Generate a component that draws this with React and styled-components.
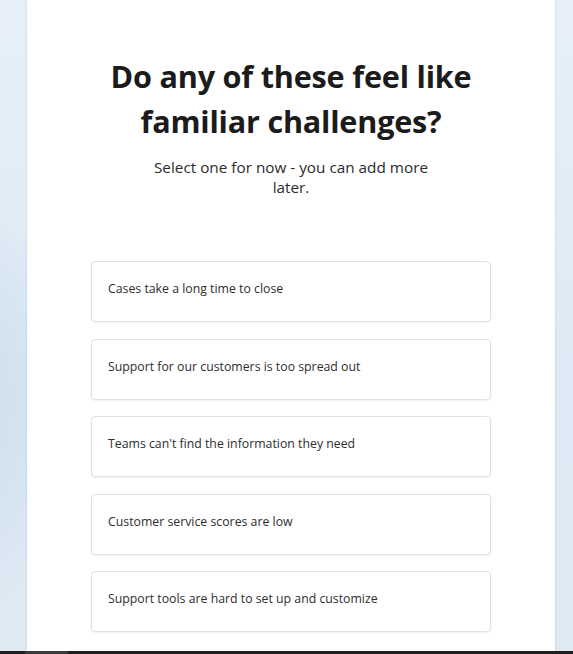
import styled, { createGlobalStyle } from 'styled-components';

const GlobalStyle = createGlobalStyle`
  html, body {
    margin: 0;
    padding: 0;
    height: 100%;
  }
  body {
    font-family: "Open Sans", "Noto Sans", sans-serif;
    background: #e2ecf6;
  }
`;

const challenges = [
  'Cases take a long time to close',
  'Support for our customers is too spread out',
  "Teams can't find the information they need",
  'Customer service scores are low',
  'Support tools are hard to set up and customize',
];

const Page = () => (
  <>
    <GlobalStyle />
    <Screen>
      <Backdrop>
        <Card>
          <Title>Do any of these feel like familiar challenges?</Title>
          <Subtitle>Select one for now - you can add more later.</Subtitle>
          <OptionList>
            {challenges.map((c) => (
              <Option key={c} type="button">{c}</Option>
            ))}
          </OptionList>
        </Card>
      </Backdrop>
      <Taskbar>
        <TaskbarButton />
      </Taskbar>
    </Screen>
  </>
);

const Screen = styled.div`
  width: 573px;
  height: 654px;
  display: flex;
  flex-direction: column;
  overflow: hidden;
`;

const Backdrop = styled.div`
  flex: 1;
  display: flex;
  padding-left: 27px;
  background:
    radial-gradient(ellipse 190px 300px at -60px 400px, rgba(196, 218, 232, 0.95), rgba(196, 218, 232, 0) 72%),
    linear-gradient(180deg, #e7f0f9 0%, #dde9f4 60%, #dfe9f4 100%);
  overflow: hidden;
`;

const Card = styled.div`
  width: 528px;
  flex-shrink: 0;
  background: #fff;
  box-shadow: 0 0 2px rgba(120, 150, 180, 0.35);
  display: flex;
  flex-direction: column;
  align-items: center;
  padding-top: 54px;
`;

const Title = styled.h1`
  margin: 0;
  width: 380px;
  text-align: center;
  font-size: 30.6px;
  line-height: 45px;
  font-weight: 700;
  color: #1b1b1b;
  letter-spacing: -0.2px;
`;

const Subtitle = styled.p`
  margin: 13px 0 0;
  width: 290px;
  text-align: center;
  font-size: 15.3px;
  line-height: 20px;
  color: #2b2b2b;
`;

const OptionList = styled.div`
  margin-top: 64px;
  width: 400px;
  display: flex;
  flex-direction: column;
  gap: 16.5px;
`;

const Option = styled.button`
  height: 61px;
  box-sizing: border-box;
  padding: 0 16px 6px;
  display: flex;
  align-items: center;
  background: #fff;
  border: 1px solid #e1e1e1;
  border-radius: 4px;
  box-shadow: 0 1px 2px rgba(0, 0, 0, 0.06);
  font-family: inherit;
  font-size: 12.3px;
  color: #2e2e2e;
  text-align: left;
  cursor: pointer;
`;

const Taskbar = styled.div`
  height: 3px;
  background: #1f1f1f;
  display: flex;
  padding-left: 25px;
`;

const TaskbarButton = styled.div`
  width: 43px;
  background: #3a3a3a;
`;

export default Page;
